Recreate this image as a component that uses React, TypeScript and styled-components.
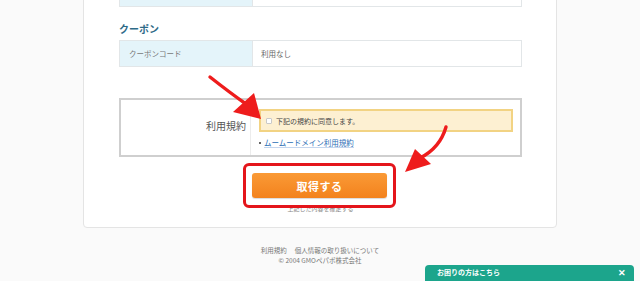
import React from "react";
import styled, { createGlobalStyle } from "styled-components";

const GlobalStyle = createGlobalStyle`
  html, body { margin: 0; padding: 0; }
  body {
    background: #fafafa;
    font-family: "Noto Sans CJK JP", "Noto Sans", "Liberation Sans", sans-serif;
    color: #555;
  }
`;

const Page = styled.div`
  position: relative;
  width: 640px;
  height: 281px;
  overflow: hidden;
`;

const Card = styled.div`
  box-sizing: border-box;
  width: 474px;
  margin: -28px auto 0;
  background: #fff;
  border: 1px solid #e4e4e4;
  border-radius: 4px;
  padding: 7px 34px 14px 35px;
  display: flex;
  flex-direction: column;
`;

const InfoRow = styled.div`
  box-sizing: border-box;
  display: grid;
  grid-template-columns: 133px 1fr;
  height: 27px;
  border: 1px solid #e2e6e8;
`;

const KeyCell = styled.div`
  background: #e4f4fa;
  border-right: 1px solid #e2e6e8;
  display: flex;
  align-items: center;
  padding-left: 9px;
  font-size: 7.5px;
  color: #777;
`;

const ValueCell = styled.div`
  display: flex;
  align-items: center;
  padding-left: 8px;
  font-size: 7.5px;
  color: #666;
`;

const Heading = styled.h3`
  margin: 16px 0 5px;
  font-size: 10px;
  line-height: 12px;
  font-weight: 700;
  color: #2d6a87;
`;

const TermsBox = styled.div`
  box-sizing: border-box;
  margin-top: 31px;
  height: 59px;
  border: 2px solid #cfcfcf;
  display: grid;
  grid-template-columns: 130px 1fr;
`;

const TermsLabel = styled.div`
  display: flex;
  align-items: center;
  justify-content: flex-end;
  padding: 0 4px 4px 0;
  border-right: 1px solid #ececec;
  font-size: 10px;
  color: #555;
`;

const TermsBody = styled.div`
  padding: 9px 7px 0 8px;
  display: flex;
  flex-direction: column;
`;

const AgreeBox = styled.label`
  box-sizing: border-box;
  height: 23px;
  border: 2px solid #f2d383;
  background: #fdf0d2;
  display: flex;
  align-items: center;
  gap: 4px;
  padding-left: 5px;
  font-size: 7px;
  color: #444;
`;

const Check = styled.span`
  box-sizing: border-box;
  width: 6px;
  height: 6px;
  border: 1px solid #c9c9c9;
  border-radius: 1px;
  background: #fff;
`;

const LinkLine = styled.div`
  margin-top: 6px;
  display: flex;
  align-items: center;
  gap: 3px;
  font-size: 7.5px;
  color: #2a6db5;
`;

const Bullet = styled.span`
  width: 2px;
  height: 2px;
  border-radius: 50%;
  background: #333;
`;

const TermsLink = styled.a`
  color: #2a6db5;
  text-decoration: none;
  border-bottom: 1px solid #c4d6ee;
  line-height: 9px;
`;

const Highlight = styled.div`
  box-sizing: border-box;
  align-self: center;
  margin: 6px 0 0 -2px;
  padding: 7px 6px;
  border: 3px solid #e4151b;
  border-radius: 6px;
  position: relative;
  z-index: 1;
  background: transparent;
`;

const SubmitButton = styled.button`
  display: block;
  width: 135px;
  height: 25px;
  border: none;
  border-radius: 3px;
  background: linear-gradient(#fa9a36, #f3821d);
  color: #fff;
  font-family: inherit;
  font-size: 11px;
  font-weight: 700;
  letter-spacing: 0.5px;
  box-shadow: 0 1px 1px rgba(0, 0, 0, 0.15);
`;

const Note = styled.p`
  margin: -3px 0 0;
  text-align: center;
  font-size: 6px;
  line-height: 8px;
  color: #888;
`;

const Footer = styled.footer`
  margin-top: 17px;
  text-align: center;
  font-size: 6.5px;
  line-height: 10px;
  color: #777;
`;

const FooterLinks = styled.div`
  display: flex;
  justify-content: center;
  gap: 8px;
`;

const HelpBar = styled.div`
  position: absolute;
  left: 425px;
  top: 265px;
  width: 209px;
  height: 20px;
  border-radius: 4px 4px 0 0;
  background: #1ca58c;
  color: #fff;
  display: flex;
  justify-content: space-between;
  padding: 0 8px 0 12px;
  box-sizing: border-box;
  font-size: 7px;
  font-weight: 700;
  line-height: 15px;
`;

const Close = styled.span`
  font-size: 9px;
  font-weight: 700;
`;

const Annotations = styled.svg`
  position: absolute;
  left: 0;
  top: 0;
  pointer-events: none;
  z-index: 2;
`;

export default function App() {
  return (
    <Page>
      <GlobalStyle />
      <Card>
        <InfoRow>
          <KeyCell />
          <ValueCell />
        </InfoRow>
        <Heading>クーポン</Heading>
        <InfoRow>
          <KeyCell>クーポンコード</KeyCell>
          <ValueCell>利用なし</ValueCell>
        </InfoRow>
        <TermsBox>
          <TermsLabel>利用規約</TermsLabel>
          <TermsBody>
            <AgreeBox>
              <Check />
              下記の規約に同意します。
            </AgreeBox>
            <LinkLine>
              <Bullet />
              <TermsLink href="#">ムームードメイン利用規約</TermsLink>
            </LinkLine>
          </TermsBody>
        </TermsBox>
        <Highlight>
          <SubmitButton>取得する</SubmitButton>
        </Highlight>
        <Note>上記した内容を確定する</Note>
      </Card>
      <Footer>
        <FooterLinks>
          <span>利用規約</span>
          <span>個人情報の取り扱いについて</span>
        </FooterLinks>
        <div>© 2004 GMOペパボ株式会社</div>
      </Footer>
      <HelpBar>
        <span>お困りの方はこちら</span>
        <Close>✕</Close>
      </HelpBar>
      <Annotations width="640" height="281" viewBox="0 0 640 281">
        <path d="M210 77 Q229 92 246 104" stroke="#ee1c1c" strokeWidth="3.4" fill="none" strokeLinecap="round" />
        <polygon points="261,119 233,112 254,93" fill="#ee1c1c" />
        <path d="M446 127 Q440 148 420 158" stroke="#ee1c1c" strokeWidth="3.4" fill="none" strokeLinecap="round" />
        <polygon points="405,172 415,149 431,164" fill="#ee1c1c" />
      </Annotations>
    </Page>
  );
}
